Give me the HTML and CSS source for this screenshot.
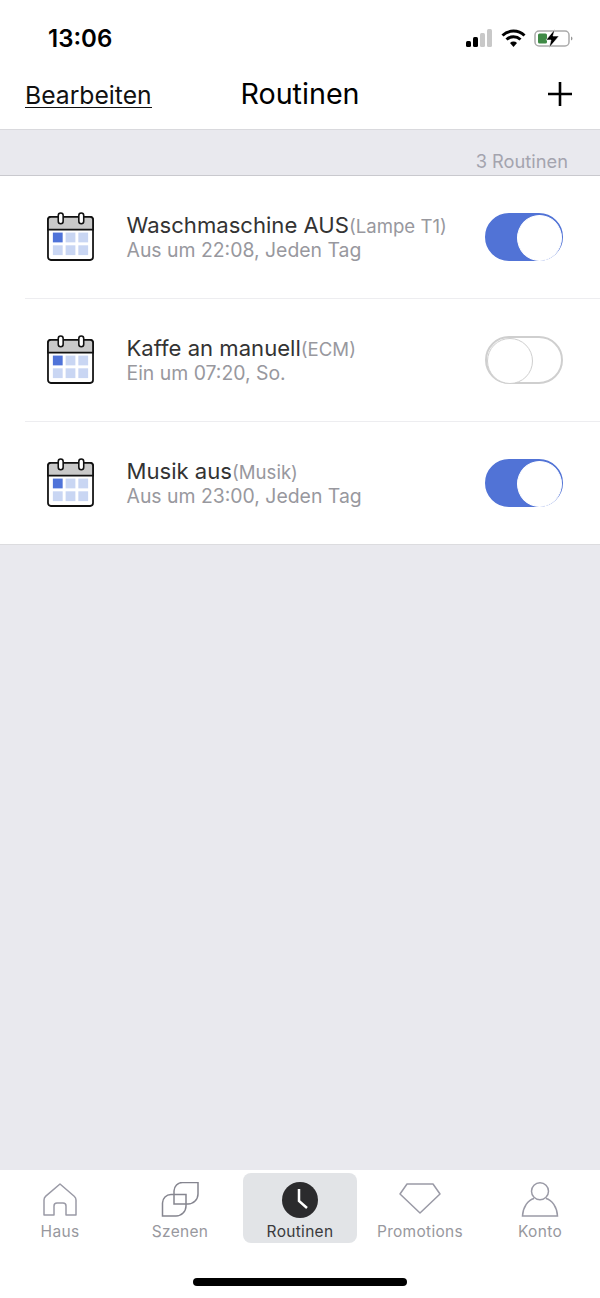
FILE: index.html
```html
<!DOCTYPE html>
<html lang="de">
<head>
    <meta charset="UTF-8">
    <title>Routinen</title>
    <link rel="stylesheet" href="styles.css">
</head>
<body>
    <svg class="defs" width="0" height="0">
        <symbol id="cal" viewBox="0 0 48 50">
            <rect x="1" y="5" width="46" height="44" rx="3" fill="#fff" stroke="#111" stroke-width="1.8"/>
            <path d="M1 18V8a3 3 0 0 1 3-3h40a3 3 0 0 1 3 3v10z" fill="#c9c9c9" stroke="#111" stroke-width="1.8"/>
            <rect x="11.500" y="1" width="5" height="11" rx="2.500" fill="#fff" stroke="#111" stroke-width="1.600"/>
            <rect x="32.500" y="1" width="5" height="11" rx="2.500" fill="#fff" stroke="#111" stroke-width="1.600"/>
            <rect x="6" y="21" width="10" height="10" fill="#4f73d9"/>
            <rect x="19" y="21" width="10" height="10" fill="#c9d6f3"/>
            <rect x="32" y="21" width="10" height="10" fill="#c9d6f3"/>
            <rect x="6" y="34" width="10" height="10" fill="#c9d6f3"/>
            <rect x="19" y="34" width="10" height="10" fill="#c9d6f3"/>
            <rect x="32" y="34" width="10" height="10" fill="#c9d6f3"/>
        </symbol>
    </svg>

    <div class="status">
        <span class="time">13:06</span>
        <div class="status-icons">
            <svg width="27" height="18" viewBox="0 0 27 18">
                <rect x="0" y="12" width="5" height="6" rx="1.500" fill="#000"/>
                <rect x="7" y="8" width="5" height="10" rx="1.500" fill="#000"/>
                <rect x="14" y="4" width="5" height="14" rx="1.500" fill="#c8c8c8"/>
                <rect x="21" y="0" width="5" height="18" rx="1.500" fill="#c8c8c8"/>
            </svg>
            <svg width="25" height="19" viewBox="0 0 25 19">
                <path d="M1.500 6.500a16 16 0 0 1 22 0" fill="none" stroke="#000" stroke-width="3"/>
                <path d="M5.500 10.500a10.500 10.500 0 0 1 14 0" fill="none" stroke="#000" stroke-width="3"/>
                <path d="M9 14a5 5 0 0 1 7 0l-3.500 4z" fill="#000"/>
            </svg>
            <svg width="39" height="19" viewBox="0 0 39 19">
                <rect x="1" y="2" width="34" height="15" rx="4" fill="#fff" stroke="#aaa" stroke-width="1.500"/>
                <rect x="4" y="4.500" width="9" height="10" rx="1.500" fill="#3f8a46"/>
                <path d="M37 7.500v4a2 2 0 0 0 1.500-2 2 2 0 0 0-1.500-2z" fill="#999"/>
                <path d="M21 0 12 11h5l-2 8 10-12h-6z" fill="#000" stroke="#fff" stroke-width=".6"/>
            </svg>
        </div>
    </div>

    <header class="nav">
        <a class="edit" href="#">Bearbeiten</a>
        <h1>Routinen</h1>
        <svg class="plus" width="26" height="26" viewBox="0 0 26 26">
            <path d="M13 1v24M1 13h24" stroke="#000" stroke-width="2.600"/>
        </svg>
    </header>

    <main class="content">
        <div class="count">3 Routinen</div>
        <ul class="list">
            <li class="row">
                <svg class="cal" width="47" height="49"><use href="#cal"/></svg>
                <div class="info">
                    <div class="name">Waschmaschine AUS<small>(Lampe T1)</small></div>
                    <div class="sub">Aus um 22:08, Jeden Tag</div>
                </div>
                <span class="toggle on"></span>
            </li>
            <li class="row">
                <svg class="cal" width="47" height="49"><use href="#cal"/></svg>
                <div class="info">
                    <div class="name">Kaffe an manuell<small>(ECM)</small></div>
                    <div class="sub">Ein um 07:20, So.</div>
                </div>
                <span class="toggle"></span>
            </li>
            <li class="row">
                <svg class="cal" width="47" height="49"><use href="#cal"/></svg>
                <div class="info">
                    <div class="name">Musik aus<small>(Musik)</small></div>
                    <div class="sub">Aus um 23:00, Jeden Tag</div>
                </div>
                <span class="toggle on"></span>
            </li>
        </ul>
    </main>

    <nav class="tabs">
        <a class="tab" href="#">
            <svg width="38" height="36" viewBox="0 0 38 36" fill="none" stroke="#9a9aa6" stroke-width="1.500">
                <path d="M3 33V18a5 5 0 0 1 1.800-3.800L19 2l14.200 12.200A5 5 0 0 1 35 18v15H25V24a3 3 0 0 0-3-3h-6a3 3 0 0 0-3 3v9z" stroke-linejoin="round"/>
            </svg>
            <span>Haus</span>
        </a>
        <a class="tab" href="#">
            <svg width="38" height="36" viewBox="0 0 38 36" fill="none" stroke="#85858f" stroke-width="1.500">
                <path d="M1.500 34V21a8.500 8.500 0 0 1 8.500-8.500h15V24a10 10 0 0 1-10 10z"/>
                <path d="M13 22V9a8.500 8.500 0 0 1 8.500-8.500H37V12a10 10 0 0 1-10 10z"/>
            </svg>
            <span>Szenen</span>
        </a>
        <a class="tab active" href="#">
            <svg width="36" height="36" viewBox="0 0 36 36">
                <circle cx="18" cy="18" r="18" fill="#2b2b2d"/>
                <path d="M17 7v12l8 7" fill="none" stroke="#fff" stroke-width="2.500"/>
            </svg>
            <span>Routinen</span>
        </a>
        <a class="tab" href="#">
            <svg width="42" height="36" viewBox="0 0 42 36" fill="none" stroke="#9a9aa6" stroke-width="1.500">
                <path d="M8 2h26l7 10-20 19L1 12z" stroke-linejoin="round"/>
            </svg>
            <span>Promotions</span>
        </a>
        <a class="tab" href="#">
            <svg width="38" height="36" viewBox="0 0 38 36" fill="none" stroke="#9a9aa6" stroke-width="1.500">
                <circle cx="19" cy="9.300" r="8.500"/>
                <path d="M13 16.500C7 18 2 25 1.500 34h35C36 25 31 18 25 16.500"/>
            </svg>
            <span>Konto</span>
        </a>
        <span class="home"></span>
    </nav>
</body>
</html>
```

FILE: styles.css
```css
* {
    padding: 0;
    margin: 0;
    box-sizing: border-box;
    list-style: none;
}
html, body {
    height: 100%;
}
body {
    display: flex;
    flex-direction: column;
    background-color: #fff;
    font-family: Inter, "Noto Sans", "Liberation Sans", sans-serif;
    color: #333;
}
a {
    color: inherit;
    text-decoration: none;
}
.defs {
    position: absolute;
}
.status {
    display: flex;
    justify-content: space-between;
    align-items: center;
    height: 76px;
    padding: 0 27px 0 48px;
}
.time {
    font-size: 24px;
    font-weight: 600;
    color: #000;
}
.status-icons {
    display: flex;
    align-items: center;
    gap: 8px;
}
.nav {
    position: relative;
    display: flex;
    justify-content: space-between;
    align-items: center;
    height: 54px;
    padding: 0 27px 18px 25px;
    border-bottom: 1px solid #d9d9dd;
    color: #000;
}
.edit {
    padding-top: 3px;
    font-size: 24.700px;
    line-height: 24px;
    color: #111;
    border-bottom: 1.500px solid #111;
}
.nav h1 {
    position: absolute;
    left: 0;
    right: 0;
    top: 1px;
    text-align: center;
    font-size: 28.700px;
    font-weight: 400;
    line-height: 34px;
}
.content {
    flex: 1;
    background-color: #e9e9ee;
}
.count {
    height: 46px;
    padding: 20px 32px 0 0;
    text-align: right;
    font-size: 18.300px;
    line-height: 22px;
    color: #a4a4ae;
    border-bottom: 1px solid #c9c9ce;
}
.list {
    background-color: #fff;
}
.row {
    position: relative;
    display: flex;
    align-items: center;
    height: 123px;
    padding: 0 37px 1px 47px;
}
.row::after {
    content: "";
    position: absolute;
    bottom: 0;
    left: 25px;
    right: 0;
    height: 1px;
    background-color: #ededf0;
}
.row:last-child::after {
    left: 0;
    background-color: #dcdcdf;
}
.cal {
    flex: none;
    margin-bottom: 2px;
}
.info {
    flex: 1;
    margin: 0 0 0 32.500px;
}
.name {
    font-size: 22.100px;
    line-height: 25px;
}
.name small {
    font-size: 18.600px;
    color: #98989e;
}
.sub {
    font-size: 19.400px;
    line-height: 22px;
    color: #98989e;
}
.toggle {
    position: relative;
    flex: none;
    width: 78px;
    height: 48px;
    border: 2px solid #cfcfcf;
    border-radius: 24px;
    background-color: #fff;
}
.toggle::after {
    content: "";
    position: absolute;
    top: 0;
    left: 0;
    width: 44px;
    height: 44px;
    border: 1px solid #cfcfcf;
    border-radius: 50%;
    background-color: #fff;
}
.toggle.on {
    border-color: #5173d6;
    background-color: #5173d6;
}
.toggle.on::after {
    left: 30px;
    width: 43px;
    border-color: #fff;
}
.tabs {
    position: relative;
    display: grid;
    grid-template-columns: repeat(5, 120px);
    height: 128px;
    padding-top: 3px;
    background-color: #fff;
}
.tab {
    display: flex;
    flex-direction: column;
    align-items: center;
    height: 70px;
    padding-top: 9px;
    border-radius: 8px;
    font-size: 15.500px;
    letter-spacing: .3px;
    color: #98989e;
}
.tab svg {
    display: block;
    height: 36px;
}
.tab span {
    margin-top: 4px;
    line-height: 20px;
}
.tab.active {
    margin: 0 3px;
    background-color: #e2e4e7;
    color: #3a3a3c;
}
.home {
    position: absolute;
    left: 193px;
    bottom: 12px;
    width: 214px;
    height: 8px;
    border-radius: 4px;
    background-color: #000;
}
```
